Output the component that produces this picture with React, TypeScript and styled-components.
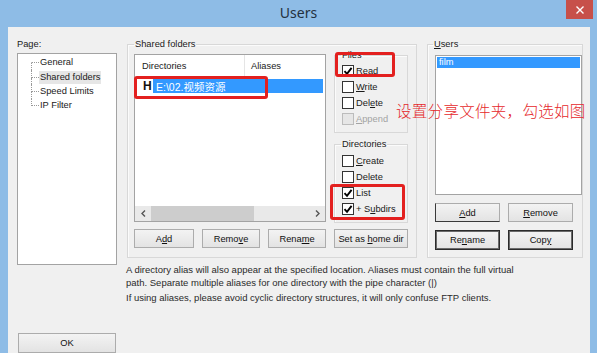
import React from "react";
import styled, { createGlobalStyle, css } from "styled-components";

const GlobalStyle = createGlobalStyle`
  html, body { margin: 0; padding: 0; background: #8ebce6; overflow: hidden; }
  body { font-family: "Liberation Sans", Arial, sans-serif; }
  * { box-sizing: border-box; }
`;

const UI_FONT = `"Liberation Sans", Arial, "Noto Sans CJK SC", sans-serif`;

const Window = styled.div`
  position: relative;
  width: 597px;
  height: 353px;
  background: #8ebce6;
  display: flex;
  flex-direction: column;
  overflow: hidden;
  font-family: ${UI_FONT};
`;

const TitleBar = styled.div`
  height: 27px;
  flex: none;
  display: grid;
  grid-template-columns: 1fr auto 1fr;
  align-items: start;
`;

const Title = styled.div`
  grid-column: 2;
  font-family: "Noto Sans", "Open Sans", sans-serif;
  font-size: 14px;
  line-height: 26px;
  color: #24313e;
`;

const CloseButton = styled.div`
  grid-column: 3;
  justify-self: end;
  width: 27px;
  height: 19px;
  margin-right: 4px;
  background: #c7504a;
  display: flex;
  align-items: center;
  justify-content: center;
`;

const Client = styled.div`
  flex: 1;
  margin: 0 7px 0 8px;
  background: #f0f0f0;
  display: flex;
  gap: 10px;
  padding-left: 9px;
  font-size: 9.3px;
  color: #1a1a1a;
  min-height: 0;
`;

const LeftColumn = styled.div`
  width: 100px;
  flex: none;
  display: flex;
  flex-direction: column;
  padding-top: 11px;
`;

const PageLabel = styled.div`
  line-height: 12px;
  margin-bottom: 3px;
`;

const TreeBox = styled.div`
  height: 217px;
  background: #fff;
  border: 1px solid #a3a3a3;
  padding: 1.5px 0 0 13px;
  display: flex;
  flex-direction: column;
`;

const TreeItem = styled.div`
  display: flex;
  height: 14.4px;
  align-items: center;
`;

const Connector = styled.span`
  width: 8px;
  align-self: stretch;
  display: flex;
  flex-direction: column;
`;

const ConnTop = styled.span<{ $first?: boolean }>`
  flex: 1;
  border-left: ${(p) => (p.$first ? "1px solid transparent" : "1px dotted #999")};
  border-bottom: 1px dotted #999;
`;

const ConnBottom = styled.span<{ $last?: boolean }>`
  flex: 1;
  border-left: ${(p) => (p.$last ? "1px solid transparent" : "1px dotted #999")};
`;

const TreeLabel = styled.span<{ $selected?: boolean }>`
  padding: 0 1px;
  line-height: 13px;
  background: ${(p) => (p.$selected ? "#e6e6e6" : "transparent")};
`;

const OkButtonWrap = styled.div`
  margin-top: 68px;
  padding: 0 1px;
`;

const RightArea = styled.div`
  width: 456px;
  flex: none;
  display: flex;
  flex-direction: column;
  padding-top: 11px;
`;

const TopRow = styled.div`
  display: flex;
  gap: 10px;
`;

const GroupBox = styled.fieldset<{ $w: number; $h: number }>`
  margin: 0;
  padding: 0;
  min-width: 0;
  width: ${(p) => p.$w}px;
  height: ${(p) => p.$h}px;
  border: 1px solid #d8d8d8;
  box-shadow: inset 1px 1px 0 #fbfbfb;
`;

const Legend = styled.legend<{ $offset: number }>`
  font-size: 9.3px;
  line-height: 12px;
  padding: 0 1px;
  margin-left: ${(p) => p.$offset}px;
  color: #1a1a1a;
`;

const SharedBody = styled.div`
  display: grid;
  grid-template-columns: 192px 74px;
  column-gap: 8px;
  row-gap: 6px;
  padding-left: 6px;
  margin-top: -1px;
  align-items: start;
`;

const ListBox = styled.div<{ $h: number; $mt: number }>`
  height: ${(p) => p.$h}px;
  margin-top: ${(p) => p.$mt}px;
  background: #fff;
  border: 1px solid #a3a3a3;
  display: flex;
  flex-direction: column;
`;

const ListHeader = styled.div`
  display: flex;
  height: 21px;
  flex: none;
`;

const HeaderCell = styled.div<{ $w?: number; $pl: number }>`
  ${(p) => (p.$w ? css`width: ${p.$w}px;` : css`flex: 1;`)}
  padding-left: ${(p) => p.$pl}px;
  display: flex;
  align-items: center;
  border-right: ${(p) => (p.$w ? "1px solid #e5e5e5" : "none")};
`;

const DirRow = styled.div`
  display: flex;
  height: 14px;
  margin-top: 3px;
  padding-left: 8px;
  align-items: center;
`;

const HomeMark = styled.span`
  width: 10px;
  font-weight: bold;
  font-size: 12px;
  color: #111;
  line-height: 14px;
`;

const Selected = styled.span`
  flex: 1;
  align-self: stretch;
  margin-right: 2px;
  background: #3399ff;
  color: #fff;
  padding-left: 3px;
  display: flex;
  align-items: center;
  font-size: 10.5px;
`;

const HScrollbar = styled.div`
  margin-top: auto;
  height: 15px;
  flex: none;
  background: #e9e9e9;
  display: flex;
  align-items: center;
`;

const ScrollArrow = styled.span`
  width: 16px;
  height: 15px;
  display: flex;
  align-items: center;
  justify-content: center;
  flex: none;
`;

const ScrollThumb = styled.span`
  width: 103px;
  height: 15px;
  background: #cdcdcd;
`;

const ScrollSpacer = styled.span`
  flex: 1;
`;

const SideColumn = styled.div`
  display: flex;
  flex-direction: column;
  gap: 5px;
`;

const CheckList = styled.div<{ $pt: number }>`
  display: flex;
  flex-direction: column;
  padding: ${(p) => p.$pt}px 0 0 7px;
`;

const CheckRow = styled.div<{ $disabled?: boolean }>`
  display: flex;
  align-items: center;
  gap: 2px;
  height: 16px;
  color: ${(p) => (p.$disabled ? "#a3a3a3" : "#1a1a1a")};
`;

const Box = styled.span<{ $disabled?: boolean }>`
  width: 12px;
  height: 12px;
  flex: none;
  border: 1px solid ${(p) => (p.$disabled ? "#bcbcbc" : "#333")};
  background: ${(p) => (p.$disabled ? "#e6e6e6" : "#fff")};
  display: flex;
  align-items: center;
  justify-content: center;
`;

const ButtonRow = styled.div<{ $span?: boolean; $mt?: number }>`
  display: flex;
  gap: 8px;
  ${(p) => p.$span && css`grid-column: 1 / -1;`}
  margin-top: ${(p) => p.$mt ?? 0}px;
`;

type BtnVariant = "normal" | "dark" | "focus";

const Button = styled.div<{ $w: number; $h?: number; $variant?: BtnVariant }>`
  width: ${(p) => p.$w}px;
  height: ${(p) => p.$h ?? 19}px;
  flex: none;
  display: flex;
  align-items: center;
  justify-content: center;
  font-size: 9.3px;
  color: #111;
  white-space: pre;
  background: linear-gradient(#f3f3f3, #e3e3e3);
  border: 1px solid #acacac;
  ${(p) =>
    p.$variant === "dark" &&
    css`
      border: 1px solid #2b2b2b;
      box-shadow: inset 0 0 0 1px #6a6a6a;
    `}
  ${(p) =>
    p.$variant === "focus" &&
    css`
      border-left-color: #3a3a3a;
      border-bottom-color: #3a3a3a;
    `}
`;

const UsersBody = styled.div`
  display: flex;
  flex-direction: column;
  padding-left: 7px;
  margin-top: -1px;
`;

const UserRow = styled.div`
  height: 11px;
  margin: 1px;
  background: #3399ff;
  color: #fff;
  padding-left: 2px;
  line-height: 11px;
`;

const Note = styled.p<{ $mt: number }>`
  margin: ${(p) => p.$mt}px 0 0 -1px;
  line-height: 13px;
  color: #2a2a2a;
  font-size: 9.5px;
`;

const Highlight = styled.div<{ $x: number; $y: number; $w: number; $h: number }>`
  position: absolute;
  left: ${(p) => p.$x}px;
  top: ${(p) => p.$y}px;
  width: ${(p) => p.$w}px;
  height: ${(p) => p.$h}px;
  border: 3px solid #e3201f;
  border-radius: 3px;
  pointer-events: none;
`;

const Annotation = styled.div`
  position: absolute;
  left: 396px;
  top: 100px;
  font-family: "Noto Sans CJK SC", sans-serif;
  font-size: 15.5px;
  line-height: 20px;
  letter-spacing: 0.3px;
  font-weight: 300;
  color: #e5282b;
  white-space: nowrap;
`;

const Check = () => (
  <svg width="10" height="10" viewBox="0 0 10 10">
    <path d="M1.5 5.2 L4 7.8 L8.6 1.8" fill="none" stroke="#000" strokeWidth="1.9" />
  </svg>
);

const Chevron = ({ dir }: { dir: "left" | "right" }) => (
  <svg width="5" height="7" viewBox="0 0 5 7">
    <path
      d={dir === "left" ? "M4 0.5 L1 3.5 L4 6.5" : "M1 0.5 L4 3.5 L1 6.5"}
      fill="none"
      stroke="#555"
      strokeWidth="1.4"
    />
  </svg>
);

const CheckItem = ({
  label,
  checked,
  disabled,
}: {
  label: React.ReactNode;
  checked?: boolean;
  disabled?: boolean;
}) => (
  <CheckRow $disabled={disabled}>
    <Box $disabled={disabled}>{checked && <Check />}</Box>
    <span>{label}</span>
  </CheckRow>
);

const treeItems = ["General", "Shared folders", "Speed Limits", "IP Filter"];

export default function App() {
  return (
    <>
      <GlobalStyle />
      <Window>
        <TitleBar>
          <Title>Users</Title>
          <CloseButton>
            <svg width="8" height="8" viewBox="0 0 8 8">
              <path d="M0.5 0.5 L7.5 7.5 M7.5 0.5 L0.5 7.5" stroke="#fff" strokeWidth="1.4" />
            </svg>
          </CloseButton>
        </TitleBar>
        <Client>
          <LeftColumn>
            <PageLabel>Page:</PageLabel>
            <TreeBox>
              {treeItems.map((t, i) => (
                <TreeItem key={t}>
                  <Connector>
                    <ConnTop $first={i === 0} />
                    <ConnBottom $last={i === treeItems.length - 1} />
                  </Connector>
                  <TreeLabel $selected={i === 1}>{t}</TreeLabel>
                </TreeItem>
              ))}
            </TreeBox>
            <OkButtonWrap>
              <Button $w={98} $h={20}><span>OK</span></Button>
            </OkButtonWrap>
          </LeftColumn>
          <RightArea>
            <TopRow>
              <GroupBox $w={290} $h={220}>
                <Legend $offset={6}>Shared folders</Legend>
                <SharedBody>
                  <ListBox $h={168} $mt={5}>
                    <ListHeader>
                      <HeaderCell $w={110} $pl={7}>Directories</HeaderCell>
                      <HeaderCell $pl={6}>Aliases</HeaderCell>
                    </ListHeader>
                    <DirRow>
                      <HomeMark>H</HomeMark>
                      <Selected>E:\02.视频资源</Selected>
                    </DirRow>
                    <HScrollbar>
                      <ScrollArrow>
                        <Chevron dir="left" />
                      </ScrollArrow>
                      <ScrollThumb />
                      <ScrollSpacer />
                      <ScrollArrow>
                        <Chevron dir="right" />
                      </ScrollArrow>
                    </HScrollbar>
                  </ListBox>
                  <SideColumn>
                    <GroupBox $w={74} $h={84}>
                      <Legend $offset={6}>Files</Legend>
                      <CheckList $pt={2}>
                        <CheckItem checked label={<><u>R</u>ead</>} />
                        <CheckItem label={<><u>W</u>rite</>} />
                        <CheckItem label={<>Del<u>e</u>te</>} />
                        <CheckItem disabled label={<><u>A</u>ppend</>} />
                      </CheckList>
                    </GroupBox>
                    <GroupBox $w={74} $h={85}>
                      <Legend $offset={6}>Directories</Legend>
                      <CheckList $pt={3}>
                        <CheckItem label={<><u>C</u>reate</>} />
                        <CheckItem label="Delete" />
                        <CheckItem checked label="List" />
                        <CheckItem checked label={<>+ S<u>u</u>bdirs</>} />
                      </CheckList>
                    </GroupBox>
                  </SideColumn>
                  <ButtonRow $span>
                    <Button $w={60}><span>A<u>d</u>d</span></Button>
                    <Button $w={58}><span>Remo<u>v</u>e</span></Button>
                    <Button $w={58}><span>Rena<u>m</u>e</span></Button>
                    <Button $w={74}><span>Set as <u>h</u>ome dir</span></Button>
                  </ButtonRow>
                </SharedBody>
              </GroupBox>
              <GroupBox $w={156} $h={220}>
                <Legend $offset={5}>
                  <u>U</u>sers
                </Legend>
                <UsersBody>
                  <ListBox $h={140} $mt={6}>
                    <UserRow>film</UserRow>
                  </ListBox>
                  <ButtonRow $mt={8}>
                    <Button $w={65} $variant="focus"><span><u>A</u>dd</span></Button>
                    <Button $w={65}><span><u>R</u>emove</span></Button>
                  </ButtonRow>
                  <ButtonRow $mt={8}>
                    <Button $w={65} $h={20} $variant="dark"><span>Re<u>n</u>ame</span></Button>
                    <Button $w={65} $h={20} $variant="dark"><span>Cop<u>y</u></span></Button>
                  </ButtonRow>
                </UsersBody>
              </GroupBox>
            </TopRow>
            <Note $mt={5}>
              A directory alias will also appear at the specified location. Aliases must contain the full virtual
              <br />
              path. Separate multiple aliases for one directory with the pipe character (|)
            </Note>
            <Note $mt={2}>
              If using aliases, please avoid cyclic directory structures, it will only confuse FTP clients.
            </Note>
          </RightArea>
        </Client>
        <Highlight $x={134} $y={76} $w={134} $h={23} />
        <Highlight $x={335} $y={52} $w={60} $h={25} />
        <Highlight $x={330} $y={184} $w={75} $h={36} />
        <Annotation>设置分享文件夹，勾选如图</Annotation>
      </Window>
    </>
  );
}
